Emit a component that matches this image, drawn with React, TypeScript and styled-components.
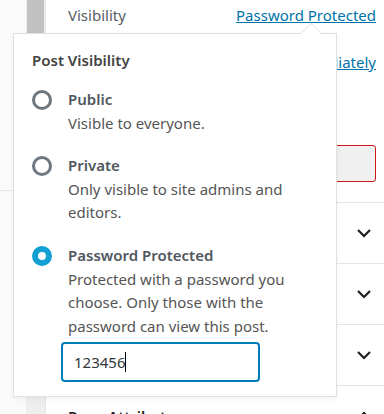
import React from "react";
import styled, { createGlobalStyle } from "styled-components";

const GlobalStyle = createGlobalStyle`
  html, body { margin: 0; padding: 0; }
  body {
    width: 384px;
    height: 414px;
    overflow: hidden;
    background: #f9f9f9;
    font-family: "Noto Sans", "Open Sans", sans-serif;
  }
`;

const Page = styled.div`
  position: relative;
  display: flex;
  width: 384px;
  height: 414px;
  overflow: hidden;
`;

const Gutter = styled.div`
  width: 26px;
  flex: none;
  background: #fafafa;
  display: flex;
  flex-direction: column;
`;

const GutterTop = styled.div`
  height: 190px;
  border-bottom: 1px solid #e4e4e4;
`;

const ScrollTrack = styled.div`
  width: 19px;
  flex: none;
  background: #eeeeee;
  display: flex;
  flex-direction: column;
`;

const ScrollThumb = styled.div`
  height: 200px;
  margin: 0 1px;
  background: #c1c1c1;
`;

const Sidebar = styled.div`
  flex: 1;
  background: #fff;
  border-left: 1px solid #e2e4e7;
  display: flex;
  flex-direction: column;
`;

const SettingRow = styled.div<{ $h: number }>`
  height: ${(p) => p.$h}px;
  flex: none;
  padding: 0 8px 0 22px;
  display: flex;
  align-items: center;
  justify-content: space-between;
  font-size: 15px;
  color: #555d66;
`;

const LinkText = styled.span`
  color: #0073aa;
  text-decoration: underline;
`;

const ButtonRow = styled.div`
  height: 109px;
  flex: none;
  padding: 51px 8px 0 22px;
  box-sizing: border-box;
  border-bottom: 1px solid #e2e4e7;
`;

const DangerButton = styled.div`
  height: 37px;
  box-sizing: border-box;
  border: 1.5px solid #cc1818;
  border-radius: 3px;
  background: #f0f0f1;
`;

const PanelRow = styled.div`
  height: 61px;
  flex: none;
  box-sizing: border-box;
  border-bottom: 1px solid #e2e4e7;
  padding: 0 8px 0 22px;
  display: flex;
  align-items: center;
  justify-content: space-between;
  font-size: 15px;
  font-weight: 600;
  color: #1e1e1e;
`;

const Popover = styled.div`
  position: absolute;
  left: 13px;
  top: 33px;
  width: 324px;
  height: 364px;
  box-sizing: border-box;
  background: #fff;
  border: 1px solid #e0e0e0;
  box-shadow: 0 2px 6px rgba(0, 0, 0, 0.05);
  padding: 14px 18px 0 18px;

  &::before {
    content: "";
    position: absolute;
    top: -11px;
    left: 286px;
    border-left: 11px solid transparent;
    border-right: 11px solid transparent;
    border-bottom: 11px solid #e0e0e0;
  }
  &::after {
    content: "";
    position: absolute;
    top: -10px;
    left: 287px;
    border-left: 10px solid transparent;
    border-right: 10px solid transparent;
    border-bottom: 10px solid #fff;
  }
`;

const Title = styled.div`
  font-size: 15px;
  line-height: 24px;
  font-weight: 600;
  color: #444;
  margin-bottom: 16px;
`;

const Option = styled.div`
  display: flex;
  gap: 16px;
  margin-bottom: 19px;
`;

const Radio = styled.span<{ $checked?: boolean }>`
  flex: none;
  width: 20px;
  height: 20px;
  margin-top: 2px;
  box-sizing: border-box;
  border-radius: 50%;
  border: ${(p) => (p.$checked ? "6px solid #11a0d2" : "3px solid #6c7781")};
  background: #fff;
`;

const OptionBody = styled.div`
  display: flex;
  flex-direction: column;
  font-size: 15px;
  line-height: 23.6px;
  color: #555;
`;

const OptionLabel = styled.span`
  font-weight: 600;
  color: #50575e;
`;

const PasswordBox = styled.div`
  margin-top: 4px;
  margin-left: -7px;
  width: 199px;
  height: 40px;
  box-sizing: border-box;
  border: 2px solid #007cba;
  border-radius: 4px;
  padding: 0 11px;
  display: flex;
  align-items: center;
  font-size: 15px;
  color: #32373c;
`;

const Caret = styled.span`
  display: inline-block;
  width: 1px;
  height: 20px;
  background: #000;
`;

const Chevron = ({ up }: { up?: boolean }) => (
  <svg width="24" height="24" viewBox="0 0 24 24" fill="none">
    <path
      d={up ? "M6 15l6-6 6 6" : "M6 9l6 6 6-6"}
      stroke="#1e1e1e"
      strokeWidth="2.2"
    />
  </svg>
);

export default function App() {
  return (
    <>
      <GlobalStyle />
      <Page>
        <Gutter>
          <GutterTop />
        </Gutter>
        <ScrollTrack>
          <ScrollThumb />
        </ScrollTrack>
        <Sidebar>
          <SettingRow $h={30}>
            <span>Visibility</span>
            <LinkText>Password Protected</LinkText>
          </SettingRow>
          <SettingRow $h={64}>
            <span />
            <LinkText>Immediately</LinkText>
          </SettingRow>
          <ButtonRow>
            <DangerButton />
          </ButtonRow>
          <PanelRow>
            <span />
            <Chevron />
          </PanelRow>
          <PanelRow>
            <span />
            <Chevron />
          </PanelRow>
          <PanelRow>
            <span />
            <Chevron />
          </PanelRow>
          <PanelRow>
            <span>Page Attributes</span>
            <Chevron up />
          </PanelRow>
        </Sidebar>

        <Popover>
          <Title>Post Visibility</Title>
          <Option>
            <Radio />
            <OptionBody>
              <OptionLabel>Public</OptionLabel>
              <span>Visible to everyone.</span>
            </OptionBody>
          </Option>
          <Option>
            <Radio />
            <OptionBody>
              <OptionLabel>Private</OptionLabel>
              <span>Only visible to site admins and editors.</span>
            </OptionBody>
          </Option>
          <Option>
            <Radio $checked />
            <OptionBody>
              <OptionLabel>Password Protected</OptionLabel>
              <span>
                Protected with a password you choose. Only those with the
                password can view this post.
              </span>
              <PasswordBox>
                123456
                <Caret />
              </PasswordBox>
            </OptionBody>
          </Option>
        </Popover>
      </Page>
    </>
  );
}
